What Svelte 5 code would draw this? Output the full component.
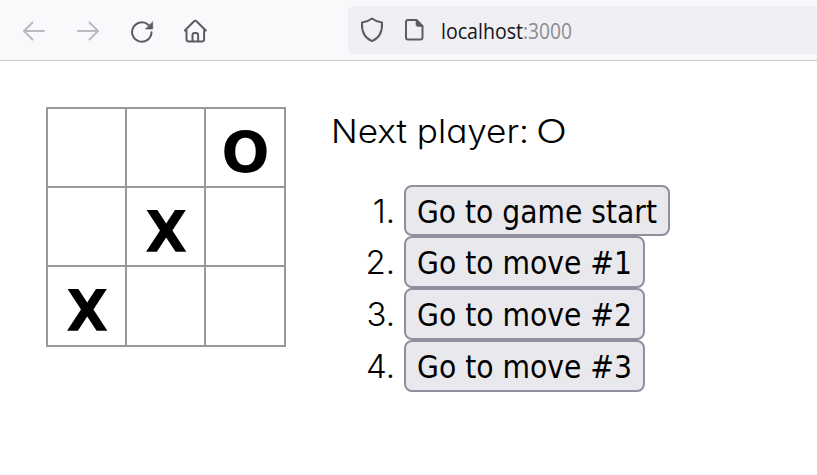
<script>
  const squares = [null, null, 'O', null, 'X', null, 'X', null, null];
  const moves = ['Go to game start', 'Go to move #1', 'Go to move #2', 'Go to move #3'];
</script>

<div class="window">
  <header>
    <nav>
      <svg class="muted" width="24" height="24" viewBox="0 0 24 24"><path d="M22 12H2M10.500 3.500L2 12l8.500 8.500" /></svg>
      <svg class="muted" width="24" height="24" viewBox="0 0 24 24"><path d="M2 12h20M13.500 3.500L22 12l-8.500 8.500" /></svg>
      <svg width="24" height="24" viewBox="0 0 24 24"><path d="M21.500 13.300A9.700 9.700 0 1 1 18.500 6" /><path class="solid" d="M22.700 3v7h-7z" /></svg>
      <svg width="24" height="24" viewBox="0 0 24 24"><path d="M.8 11.500L10.100 2.200q1.200-1 2.400 0L21.800 11.500M2.500 10v10q0 2.500 2.500 2.500h12.600q2.500 0 2.500-2.500V10M8.500 22v-6q0-2 2-2h1.600q2 0 2 2v6" /></svg>
    </nav>
    <div class="address">
      <svg width="24" height="26" viewBox="0 0 24 26"><path d="M12 1.500Q16.500 5 22 5.500C22.500 14 19.500 21 12 24.200C4.500 21 1.500 14 2 5.500Q7.500 5 12 1.500z" /></svg>
      <svg class="page" width="20" height="24" viewBox="0 0 20 24"><path d="M12.500 2H4Q2 2 2 4v15.500q0 2 2 2h12.500q2 0 2-2V8z" /><path class="solid" d="M12 2v4.500Q12 8.500 14 8.500h4.500z" /></svg>
      <div class="url">
        <svg width="82" height="30"><text x="0" y="23" textLength="82" lengthAdjust="spacingAndGlyphs">localhost</text></svg>
        <svg class="port" width="52" height="30"><text x="0" y="23" textLength="49" lengthAdjust="spacingAndGlyphs">:3000</text></svg>
      </div>
    </div>
  </header>
  <main>
    <div class="board">
      {#each squares as square}
        <button class="square">
          {#if square}
            <svg width="77" height="77"><text x={square === 'O' ? 15.5 : 18} y="64" textLength={square === 'O' ? 48 : 42.5} lengthAdjust="spacingAndGlyphs">{square}</text></svg>
          {/if}
        </button>
      {/each}
    </div>
    <section>
      <div class="status">
        <svg width="204" height="46"><text x="-1" y="36" textLength="198" lengthAdjust="spacingAndGlyphs">Next player:</text></svg>
        <svg width="36" height="46"><text x="0" y="36" textLength="31" lengthAdjust="spacingAndGlyphs">O</text></svg>
      </div>
      <ol>
        {#each moves as move, i}
          <li>
            <span class="number">{i + 1}.</span>
            <button class="move" class:start={i === 0}>
              <svg width={i ? 217 : 242} height="47"><text x="0" y="36" textLength={i ? 215 : 240} lengthAdjust="spacingAndGlyphs">{move}</text></svg>
            </button>
          </li>
        {/each}
      </ol>
    </section>
  </main>
</div>

<style>
  :global(body) { margin: 0; background: #fff; }
  .window { width: 817px; height: 475px; overflow: hidden; background: #fff; }
  header { box-sizing: border-box; height: 61px; display: flex; background: #f9f9fb; border-bottom: 1px solid #ccc; }
  nav { display: flex; gap: 30px; padding: 19px 0 0 22px; width: 326px; }
  svg { display: block; flex: none; }
  path { fill: none; stroke: #5b5b66; stroke-width: 2; stroke-linecap: round; stroke-linejoin: round; }
  .muted path { stroke: #b9b9c0; }
  .solid { fill: #5b5b66; stroke-width: .6; }
  .address { display: flex; align-items: center; flex: 1; height: 48px; margin-top: 6px; padding-left: 12px; border-radius: 6px 0 0 6px; background: #f0f0f4; }
  .page { margin-left: 20px; }
  .url { display: flex; margin-left: 17px; padding-top: 2px; }
  .url text { font: 21px "Open Sans", sans-serif; fill: #15141a; }
  .url .port text { fill: #8b8b91; }
  main { display: flex; padding: 46px 0 0 46px; }
  .board { display: grid; grid-template-columns: 77px 77px 78px; grid-template-rows: 77px 77px 78px; gap: 2px; padding: 2px; width: 236px; height: 236px; background: #999; }
  button { margin: 0; padding: 0; color: #000; }
  .square { display: flex; border: 0; background: #fff; }
  .square text { font: bold 57.500px "DejaVu Sans", sans-serif; }
  section { margin-left: 46px; }
  .status { display: flex; height: 46px; }
  text { fill: #000; }
  .status text { font: 300 33px Inter, sans-serif; font-feature-settings: "cv11"; }
  ol { list-style: none; margin: 31.750px 0 0; padding: 0; }
  li { display: flex; height: 51.700px; }
  .number { width: 63px; margin-right: 9px; text-align: right; font: 300 33px/53px Inter, sans-serif; }
  .move { box-sizing: border-box; display: flex; width: 241px; height: 51.700px; padding-left: 11px; border: 2px solid #8f8f9d; border-radius: 8px; background: #e9e9ed; overflow: hidden; }
  .start { width: 266px; }
  .move text { font: 31.500px "DejaVu Sans Condensed", "DejaVu Sans", sans-serif; font-stretch: condensed; }
</style>
